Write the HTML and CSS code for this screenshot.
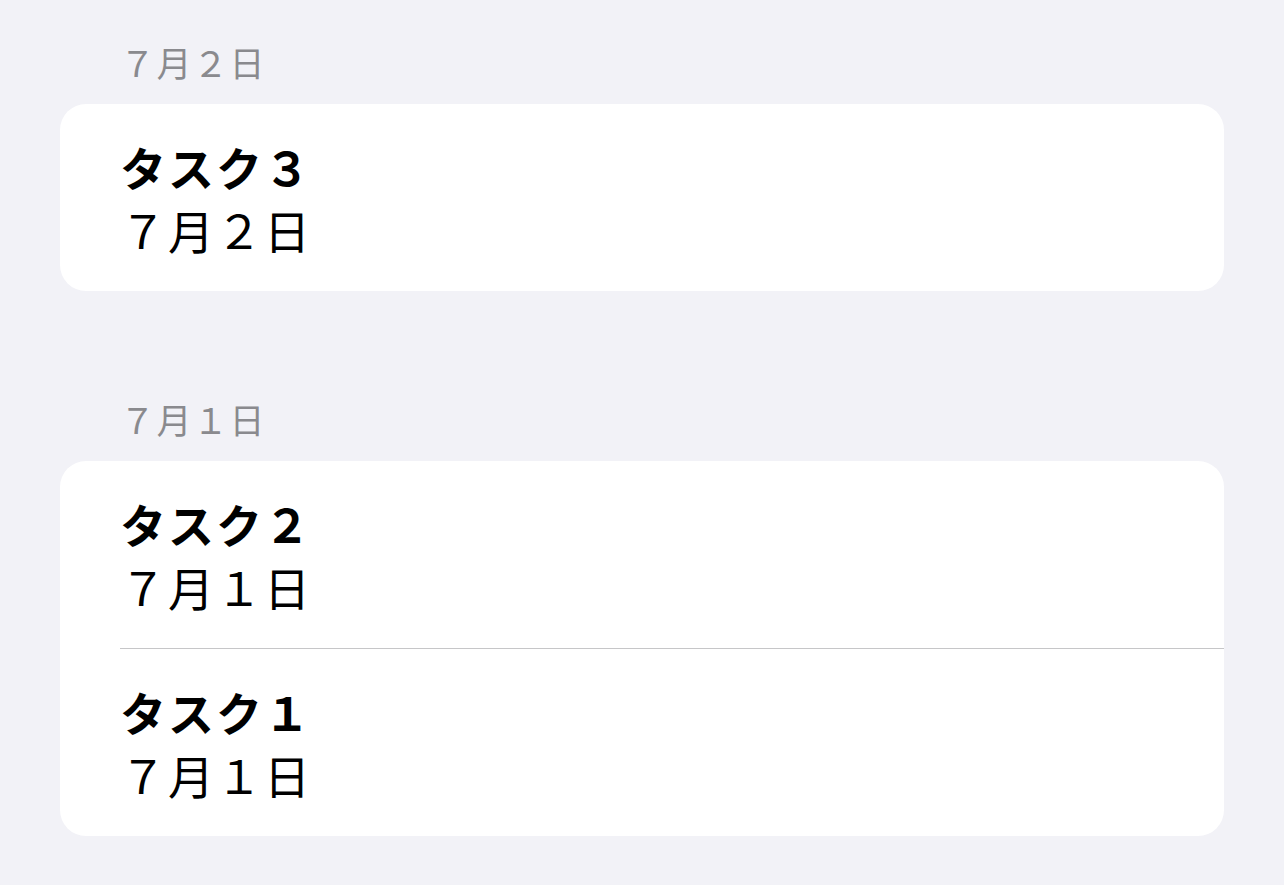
FILE: index.html
```html
<!DOCTYPE html>
<html>
<head>
	<meta charset="utf-8">
	<meta name="viewport" content="width=device-width, initial-scale=1">
	<title>タスク</title>
<link rel="stylesheet" href="styles.css">
</head>
<body>

<div class="list">
    <!-- grouped by date, newest first -->
    <div class="section">
        <div class="section-header">7月2日</div>
        <div class="card">
            <div class="row">
                <div class="row-title">タスク3</div>
                <div class="row-date">7月2日</div>
            </div>
        </div>
    </div>

    <div class="section">
        <div class="section-header">7月1日</div>
        <div class="card">
            <div class="row">
                <div class="row-title">タスク2</div>
                <div class="row-date">7月1日</div>
            </div>
            <div class="row">
                <div class="row-title">タスク1</div>
                <div class="row-date">7月1日</div>
            </div>
        </div>
    </div>
</div>

</body>
</html>
```

FILE: styles.css
```css
body {
    font-family: "Noto Sans CJK JP", "Noto Sans", sans-serif;
    font-variant-east-asian: full-width;
    background-color: #f2f2f7;
    margin: 0;
    padding: 0;
}

.list {
    margin: 0 60px;
    padding-top: 42px;
}

.section {
    margin-bottom: 108px;
}

.section:last-child {
    margin-bottom: 0;
}

.section-header {
    font-size: 35px;
    line-height: 40px;
    letter-spacing: 1.5px;
    color: #8a8a8e;
    padding-left: 60px;
    margin-bottom: 22px;
}

.card {
    background-color: #fff;
    border-radius: 26px;
    overflow: hidden;
}

.row {
    margin-left: 60px;
    padding: 31px 0 30px 0;
}

.row + .row {
    border-top: 1px solid #c6c6c8;
}

.row-title {
    font-size: 46px;
    line-height: 63px;
    letter-spacing: 2px;
    font-weight: 700;
    color: #000;
}

.row-date {
    font-size: 46px;
    line-height: 63px;
    letter-spacing: 2px;
    color: #000;
}
```
